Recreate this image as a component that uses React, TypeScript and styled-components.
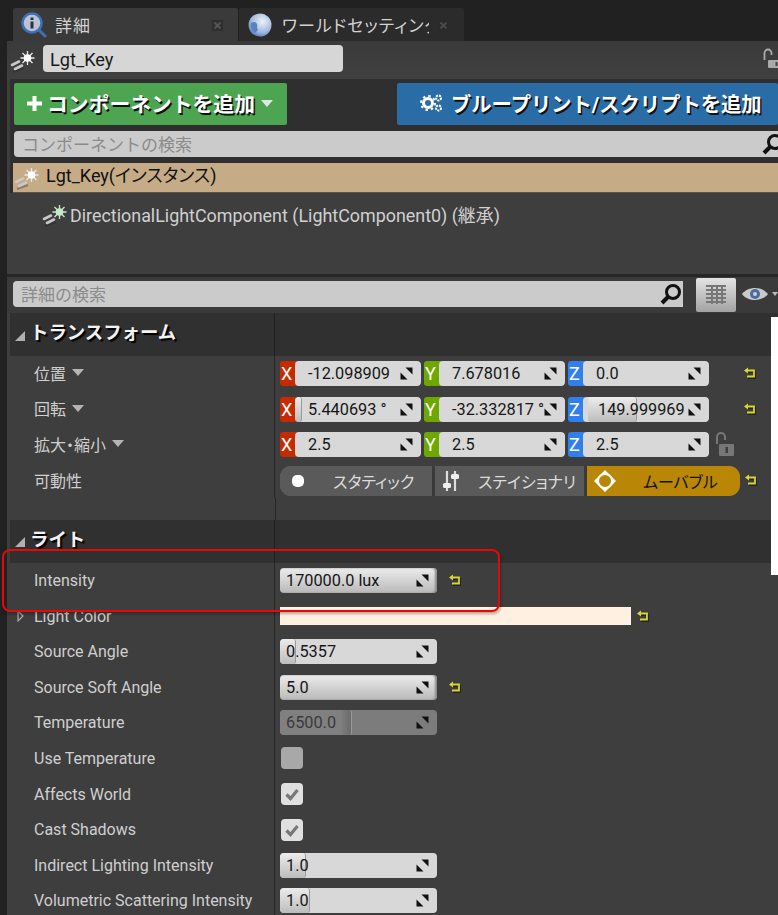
import React from "react";
import styled, { createGlobalStyle } from "styled-components";

const Global = createGlobalStyle`
  html, body { margin: 0; padding: 0; background: #212121; }
  * { box-sizing: border-box; }
`;
const FONT = `Roboto, "Noto Sans CJK JP", sans-serif`;

const Page = styled.div`
  position: relative; width: 778px; height: 915px; overflow: hidden;
  background: #212121; font-family: ${FONT}; font-size: 16px; color: #d4d4d4;
`;
const TabBar = styled.div`display: flex; height: 41px; padding: 8px 0 0 13px; gap: 1px;`;
const Tab = styled.div<{ $active?: boolean }>`
  width: 225px; display: flex; align-items: center; position: relative;
  background: ${p => (p.$active ? "#3a3a3a" : "#2b2b2b")};
  padding-left: ${p => (p.$active ? "8px" : "9px")};
  border-radius: 2px 2px 0 0; overflow: hidden;
`;
const TabIcon = styled.svg`flex: none; width: 26px; height: 26px;`;
const TabTitle = styled.span<{ $w: number }>`
  width: ${p => p.$w}px; margin-left: 8px; overflow: hidden; white-space: nowrap;
  font-size: 17px; letter-spacing: 1px; color: #d2d2d2; flex: none; font-feature-settings: "palt";
`;
const CloseBox = styled.svg`position: absolute; right: 15px; top: 12px; width: 11px; height: 11px;`;

const Panel = styled.div`margin-left: 7px; background: #3e3e3e;`;
const NameBar = styled.div`height: 38px; display: flex; align-items: center; padding-left: 3px; position: relative; background: linear-gradient(#3a3a3a, #404040);`;
const LightIcon = styled.svg`flex: none; width: 25px; height: 25px;`;
const NameInput = styled.div`
  width: 300px; height: 27px; margin: -3px 0 0 8px; background: #d6d6d6; border-radius: 4px;
  color: #1a1a1a; font-size: 18.2px; line-height: 29px; padding-left: 7px;
`;
const LockIcon = styled.svg`position: absolute; left: 756px; top: 7px; width: 18px; height: 21px;`;

const ComponentArea = styled.div`background: #2f2f2f; margin-left: 3px; padding: 4px 0 0 0;`;
const ButtonRow = styled.div`display: flex; padding-left: 4px; justify-content: space-between;`;
const AddButton = styled.div<{ $blue?: boolean }>`
  height: 42px; display: flex; align-items: center; border-radius: 2px;
  background: ${p => (p.$blue ? "#2a6ca6" : "#4ea551")};
  width: ${p => (p.$blue ? "381px" : "273px")};
  padding: 0 0 2px ${p => (p.$blue ? "23px" : "12px")};
  color: #fff; font-weight: 700; font-size: ${p => (p.$blue ? "20.3px" : "20.8px")}; white-space: nowrap;
  text-shadow: 1.5px 1.5px 0 #111;
`;
const GearIcon = styled.svg`flex: none; width: 23px; height: 20px; margin-right: 8px;`;
const PlusIcon = styled.svg`flex: none; width: 17px; height: 17px; margin-right: 4px;`;
const Caret = styled.svg`flex: none; width: 12px; height: 7px; margin-left: 6px;`;
const SearchBox = styled.div<{ $w: number; $ml: number }>`
  width: ${p => p.$w}px; height: 26px; margin-left: ${p => p.$ml}px;
  background: #cbcbcb; border-radius: 4px 0 0 4px; display: flex; align-items: center;
  padding: 0 0 2px 8px; color: #8b8b8b; font-size: 17px; position: relative;
`;
const SearchGlyph = styled.svg<{ $r: number }>`position: absolute; right: ${p => p.$r}px; top: 1px; width: 24px; height: 24px;`;
const SearchSpacer = styled.div`padding: 6px 0 6px 0; `;
const SelectedRow = styled.div`
  height: 30px; margin-left: 3px; background: #c6ab87; display: flex; align-items: center;
  color: #111; font-size: 18px; padding-left: 1px; border-bottom: 1px solid #555; 
`;
const SelText = styled.span`margin: -7px 0 0 7px; font-feature-settings: "palt";`;
const TreeArea = styled.div`height: 81px; background: #3e3e3e; margin-left: -3px; padding: 8px 0 0 35px;`;
const TreeRow = styled.div`display: flex; align-items: center; gap: 3px; font-size: 17.9px; color: #d0d0d0; white-space: nowrap;`;
const Divider = styled.div`height: 3px; background: #262626;`;
const DetailTop = styled.div`height: 36px; background: #3a3a3a; position: relative; padding: 4px 0 0 0;`;
const GridButton = styled.div`
  position: absolute; left: 689px; top: 1px; width: 40px; height: 34px; border-radius: 2px;
  background: linear-gradient(#e4e4e4, #a2a2a2); display: flex; align-items: center; justify-content: center;
`;
const GridGlyph = styled.svg`width: 22px; height: 22px;`;
const EyeGlyph = styled.svg`position: absolute; left: 735px; top: 6px; width: 36px; height: 22px;`;

const Sheet = styled.div`margin-left: 3px;`;
const Header = styled.div`
  height: 43px; display: grid; grid-template-columns: 265px 1fr; background: #303030;
`;
const HeaderName = styled.div`
  display: flex; align-items: center; border-right: 1px solid #202020;
  color: #f2f2f2; font-weight: 700; font-size: 18.4px; text-shadow: 2px 2px 1px #000;
  padding: 0 0 7px 5px;
`;
const HeadTri = styled.svg`flex: none; width: 10px; height: 10px; margin: 9px 5px 0 0;`;
const Row = styled.div`height: 35.55px; display: grid; grid-template-columns: 265px 1fr;`;
const Label = styled.div<{ $jp?: boolean }>`
  display: flex; align-items: center; padding: 0 0 ${p => (p.$jp ? "2px" : "0")} 24px; border-right: 1px solid #262626;
  color: #cfcfcf; font-size: 16px; white-space: nowrap; font-feature-settings: ${p => (p.$jp ? '"palt"' : "normal")};
`;
const ValueCell = styled.div`display: flex; align-items: center; padding-left: 5px; position: relative;`;
const Spacer = styled.div<{ $h: number }>`
  height: ${p => p.$h}px; width: 266px; border-right: 1px solid #262626;
`;
const LabelCaret = styled.svg`flex: none; width: 12px; height: 7px; margin-left: 6px;`;
const Expander = styled.svg`flex: none; width: 7px; height: 12px; margin: 0 10px 0 -17px;`;

const Axis = styled.div`display: flex; width: 141px; height: 25px; margin-right: 3px; border-radius: 3px; overflow: hidden;`;
const AxisTag = styled.div<{ $c: string }>`
  width: 18px; margin-right: -3px; background: ${p => p.$c}; color: #fff; font-size: 18px; padding-left: 1px; line-height: 25px; flex: none;
`;
const NumField = styled.div<{ $w?: number; $dim?: boolean; $full?: boolean }>`
  position: relative; height: 25px; flex: ${p => (p.$w ? "none" : "1")};
  width: ${p => (p.$w ? `${p.$w}px` : "auto")};
  background: ${p => (p.$dim ? "#7c7c7c" : p.$full ? "linear-gradient(#ececec, #b9b9b9)" : "#d8d8d8")};
  box-shadow: ${p => (p.$full ? "inset -2px 0 2px #8a8a8a" : "none")};
  border-radius: 4px; color: ${p => (p.$dim ? "#3a3a3a" : "#161616")};
  overflow: hidden; font-size: 16.3px; line-height: 25px;
`;
const Knob = styled.div<{ $dim?: boolean }>`
  position: absolute; top: 0; bottom: 0; border-radius: 3px;
  background: ${p => (p.$dim ? "linear-gradient(90deg,#808080 85%,#6a6a6a)" : "linear-gradient(#ececec,#bcbcbc)")};
  border-right: 1px solid ${p => (p.$dim ? "#999" : "#9a9a9a")};
`;
const NumText = styled.span<{ $x: number }>`position: absolute; left: ${p => p.$x}px; top: 0; white-space: nowrap;`;
const Spin = styled.svg`position: absolute; right: 8px; top: 6px; width: 13px; height: 13px;`;
const Revert = styled.svg<{ $ml: number }>`flex: none; width: 13px; height: 13px; margin-left: ${p => p.$ml}px;`;
const OpenLock = styled.svg`flex: none; width: 21px; height: 26px; margin-left: 2px;`;

const Mobility = styled.div`display: flex; width: 460px; height: 30px; margin-top: 1px; border-radius: 11px; overflow: hidden; background: #5a5a5a;`;
const MobSeg = styled.div<{ $on?: boolean; $w: number }>`
  width: ${p => p.$w}px; display: flex; align-items: center; position: relative;
  background: ${p => (p.$on ? "#b98606" : "#5a5a5a")};
  color: ${p => (p.$on ? "#111" : "#dcdcdc")}; font-size: 16px; white-space: nowrap;
  border-right: ${p => (p.$on ? "0" : "3px solid #3a3a3a")};
  font-feature-settings: "palt";
`;
const MobIcon = styled.svg`position: absolute; left: 6px; top: 3px; width: 24px; height: 24px;`;
const MobText = styled.span<{ $x: number }>`position: absolute; left: ${p => p.$x}px;`;
const Swatch = styled.div`width: 351px; height: 18px; background: #fff0df;`;
const Check = styled.div<{ $off?: boolean }>`
  width: 22px; height: 22px; margin-left: 1px; border-radius: 4px;
  background: ${p => (p.$off ? "#a8a8a8" : "#e0e0e0")}; display: flex; align-items: center; justify-content: center;
`;
const CheckMark = styled.svg`width: 16px; height: 16px;`;
const SideStrip = styled.div`position: absolute; left: 771px; top: 317px; width: 7px; height: 258px; background: #fff;`;
const Callout = styled.div`
  position: absolute; left: 2px; top: 549px; width: 498px; height: 63px;
  border: 2px solid #e80808; border-radius: 8px; box-shadow: 1px 2px 3px rgba(0,0,0,.3);
  pointer-events: none;
`;

const SpinIcon = () => (
  <Spin viewBox="0 0 13 13">
    <path d="M5.500 0.500h7v7z" fill="#111" />
    <path d="M0.500 5.500l7 7h-7z" fill="#111" />
  </Spin>
);
const RevertIcon = ({ ml }: { ml: number }) => (
  <Revert $ml={ml} viewBox="0 0 13 13">
    <path d="M3 4h8v6H4" fill="none" stroke="#1c1c10" strokeWidth="2" transform="translate(.8 .8)" />
    <path d="M3 3.500h8v6H4" fill="none" stroke="#d8d82c" strokeWidth="1.800" />
    <path d="M5 0.500v6L1 3.500z" fill="#d8d82c" />
  </Revert>
);
const Light = ({ green }: { green?: boolean }) => (
  <LightIcon viewBox="0 0 25 25">
    <path d="M3 24l11-4" stroke="#222" strokeWidth="2" opacity=".35" />
    <path d="M2 17l7-3.500M5 21l7-3.500" stroke="#c8c8c8" strokeWidth="2.600" strokeLinecap="round" />
    <g stroke={green ? "#c8e8c8" : "#e8e8e8"} strokeWidth="1.300">
      <path d="M17.500 3v14M10.500 10h14M12.500 5l10 10M22.500 5l-10 10" />
    </g>
    <circle cx="17.500" cy="10" r="3.800" fill={green ? "#c4ecc4" : "#fff"} />
  </LightIcon>
);
const Tri = () => (
  <LabelCaret viewBox="0 0 12 7"><path d="M0 0h12L6 7z" fill="#b4b4b4" /></LabelCaret>
);
const Head = ({ title }: { title: string }) => (
  <Header>
    <HeaderName>
      <HeadTri viewBox="0 0 10 10"><path d="M10 0v10H0z" fill="#b0b0b0" /></HeadTri>
      {title}
    </HeaderName>
    <div />
  </Header>
);

type Vec = { tag: string; color: string; text: string; x?: number; knob?: [number, number] };
const VecField = ({ tag, color, text, x = 13, knob }: Vec) => (
  <Axis>
    <AxisTag $c={color}>{tag}</AxisTag>
    <NumField>
      {knob && <Knob style={{ left: knob[0], width: knob[1] }} />}
      <NumText $x={x}>{text}</NumText>
      <SpinIcon />
    </NumField>
  </Axis>
);
const vec = (a: string, b: string, c: string, k1?: [number, number], k3?: [number, number]) => (
  <>
    <VecField tag="X" color="#c82a00" text={a} knob={k1} />
    <VecField tag="Y" color="#6ca800" text={b} />
    <VecField tag="Z" color="#2f80ed" text={c} x={c.length > 5 ? 15 : 13} knob={k3} />
  </>
);
const Slider = ({ text, knob, full, dim }: { text: string; knob?: number; full?: boolean; dim?: boolean }) => (
  <NumField $w={157} $full={full} $dim={dim}>
    {knob !== undefined && <Knob $dim={dim} style={{ left: 0, width: knob }} />}
    <NumText $x={6}>{text}</NumText>
    <SpinIcon />
  </NumField>
);
const CheckBox = ({ on }: { on?: boolean }) => (
  <Check $off={!on}>
    {on && (
      <CheckMark viewBox="0 0 16 16">
        <path d="M2.500 8.500l4 4 7-8.500" fill="none" stroke="#777" strokeWidth="3.200" />
      </CheckMark>
    )}
  </Check>
);

export default function App() {
  return (
    <Page>
      <Global />
      <TabBar>
        <Tab $active>
          <TabIcon viewBox="0 0 26 26">
            <path d="M17 17l7 7" stroke="#3f6fb5" strokeWidth="3" strokeLinecap="round" />
            <circle cx="11" cy="11" r="9.500" fill="#b9c4d6" stroke="#3f6fb5" strokeWidth="2.500" />
            <rect x="9.500" y="9.500" width="3" height="7" fill="#333" />
            <rect x="9.500" y="5.500" width="3" height="2.500" fill="#333" />
          </TabIcon>
          <TabTitle $w={60}>詳細</TabTitle>
          <CloseBox viewBox="0 0 11 11"><rect width="11" height="11" rx="1" fill="#2e2e2e" /><path d="M2.500 2.500l6 6M8.500 2.500l-6 6" stroke="#555" strokeWidth="2" /></CloseBox>
        </Tab>
        <Tab>
          <TabIcon viewBox="0 0 26 26">
            <defs><radialGradient id="g" cx=".6" cy=".35" r=".8"><stop offset="0" stopColor="#eef3fa" /><stop offset=".6" stopColor="#9db7dd" /><stop offset="1" stopColor="#3a5ea8" /></radialGradient></defs>
            <circle cx="12" cy="13" r="11.500" fill="url(#g)" />
            <path d="M3 11c3-2 5-1 6 1s-1 3 1 6l-3 3C4 19 2 15 3 11z" fill="#5a82bf" />
          </TabIcon>
          <TabTitle $w={147}>ワールドセッティング</TabTitle>
          <CloseBox viewBox="0 0 11 11"><rect width="11" height="11" rx="1" fill="#2a2a2a" /><path d="M2.500 2.500l6 6M8.500 2.500l-6 6" stroke="#4a4a4a" strokeWidth="2" /></CloseBox>
        </Tab>
      </TabBar>
      <Panel>
        <NameBar>
          <Light />
          <NameInput>Lgt_Key</NameInput>
          <LockIcon viewBox="0 0 18 21">
            <path d="M1.500 12V5a3.500 3.500 0 0 1 7 0v2" fill="none" stroke="#aaa" strokeWidth="1.800" />
            <rect x="5" y="12" width="13" height="8" rx="1" fill="#aaa" />
            <rect x="12.500" y="14" width="2" height="4" fill="#3e3e3e" />
          </LockIcon>
        </NameBar>
        <ComponentArea>
          <ButtonRow>
            <AddButton>
              <PlusIcon viewBox="0 0 17 17"><path d="M8.500 1v15M1 8.500h15" stroke="#fff" strokeWidth="4" /></PlusIcon>
              コンポーネントを追加
              <Caret viewBox="0 0 12 7"><path d="M0 0h12L6 7z" fill="#e4e4e4" /></Caret>
            </AddButton>
            <AddButton $blue>
              <GearIcon viewBox="0 0 23 20">
                <circle cx="8" cy="10" r="4.500" fill="none" stroke="#fff" strokeWidth="3" />
                <circle cx="8" cy="10" r="7" fill="none" stroke="#fff" strokeWidth="2" strokeDasharray="2.500 3" />
                <circle cx="18.500" cy="5" r="2.500" fill="none" stroke="#fff" strokeWidth="2" strokeDasharray="2 1" />
                <circle cx="18.500" cy="15" r="2.500" fill="none" stroke="#fff" strokeWidth="2" strokeDasharray="2 1" />
              </GearIcon>
              ブループリント/スクリプトを追加
            </AddButton>
          </ButtonRow>
          <SearchSpacer>
            <SearchBox $w={764} $ml={4}>
              コンポーネントの検索
              <SearchGlyph $r={-7} viewBox="0 0 24 24">
                <circle cx="14" cy="10" r="6.500" fill="none" stroke="#111" strokeWidth="3" />
                <path d="M9 15l-6 6" stroke="#111" strokeWidth="4" />
              </SearchGlyph>
            </SearchBox>
          </SearchSpacer>
          <SelectedRow>
            <Light />
            <SelText>Lgt_Key(インスタンス)</SelText>
          </SelectedRow>
          <TreeArea>
            <TreeRow>
              <Light green />
              <span>DirectionalLightComponent (LightComponent0) (継承)</span>
            </TreeRow>
          </TreeArea>
        </ComponentArea>
        <Divider />
        <DetailTop>
          <SearchBox $w={670} $ml={6}>
            詳細の検索
            <SearchGlyph $r={0} viewBox="0 0 24 24">
              <circle cx="14" cy="10" r="6.500" fill="none" stroke="#111" strokeWidth="3" />
              <path d="M9 15l-6 6" stroke="#111" strokeWidth="4" />
            </SearchGlyph>
          </SearchBox>
          <GridButton>
            <GridGlyph viewBox="0 0 22 22">
              <path d="M1 2h20M1 6h20M1 10h20M1 14h20M1 18h20M7 1v19M12 1v19M17 1v19" stroke="#777" strokeWidth="2" />
            </GridGlyph>
          </GridButton>
          <EyeGlyph viewBox="0 0 36 22">
            <path d="M0 11c6-8 20-8 26 0-6 8-20 8-26 0z" fill="#c9c9c9" />
            <circle cx="13" cy="11" r="5" fill="#4a6aa0" />
            <circle cx="13" cy="11" r="2" fill="#ccd" />
            <path d="M30 9h6l-3 4z" fill="#bbb" />
          </EyeGlyph>
        </DetailTop>
        <Sheet>
          <Head title="トランスフォーム" />
          <Row><Label $jp>位置<Tri /></Label><ValueCell>{vec("-12.098909", "7.678016", "0.0")}<RevertIcon ml={31} /></ValueCell></Row>
          <Row><Label $jp>回転<Tri /></Label><ValueCell>{vec("5.440693 °", "-32.332817 °", "149.999969", [0, 7], [5, 49])}<RevertIcon ml={31} /></ValueCell></Row>
          <Row>
            <Label $jp>拡大・縮小<Tri /></Label>
            <ValueCell>
              {vec("2.5", "2.5", "2.5")}
              <OpenLock viewBox="0 0 21 26">
                <path d="M3 12V5a4 4 0 0 1 8 0v3" fill="none" stroke="#777" strokeWidth="2" />
                <rect x="5" y="12" width="15" height="12" rx="1" fill="#777" />
                <rect x="11.500" y="15" width="2.500" height="6" fill="#3e3e3e" />
              </OpenLock>
            </ValueCell>
          </Row>
          <Row>
            <Label>可動性</Label>
            <ValueCell>
              <Mobility>
                <MobSeg $w={155}>
                  <MobIcon viewBox="0 0 24 24"><rect x="6" y="6" width="12" height="12" rx="5" fill="#fff" /></MobIcon>
                  <MobText $x={53}>スタティック</MobText>
                </MobSeg>
                <MobSeg $w={152}>
                  <MobIcon viewBox="0 0 24 24">
                    <path d="M6 2v20M14 2v20" stroke="#ddd" strokeWidth="2.200" />
                    <rect x="2" y="14" width="8" height="5" rx="1.500" fill="#eee" />
                    <rect x="10" y="5" width="8" height="5" rx="1.500" fill="#eee" />
                  </MobIcon>
                  <MobText $x={43}>ステイショナリ</MobText>
                </MobSeg>
                <MobSeg $on $w={153}>
                  <MobIcon viewBox="0 0 24 24">
                    <circle cx="12" cy="12" r="7" fill="none" stroke="#fff" strokeWidth="2" />
                    <path d="M12 1l5 5H7zM12 23l-5-5h10zM1 12l5-5v10zM23 12l-5 5V7z" fill="#fff" />
                  </MobIcon>
                  <MobText $x={56}>ムーバブル</MobText>
                </MobSeg>
              </Mobility>
              <RevertIcon ml={4} />
            </ValueCell>
          </Row>
          <Spacer $h={21.8} />
          <Head title="ライト" />
          <Row><Label>Intensity</Label><ValueCell><Slider text="170000.0 lux" full /><RevertIcon ml={11} /></ValueCell></Row>
          <Row>
            <Label>
              <Expander viewBox="0 0 7 12"><path d="M1 1l5 5-5 5z" fill="none" stroke="#aaa" strokeWidth="1.200" /></Expander>
              Light Color
            </Label>
            <ValueCell><Swatch /><RevertIcon ml={5} /></ValueCell>
          </Row>
          <Row><Label>Source Angle</Label><ValueCell><Slider text="0.5357" knob={16} /></ValueCell></Row>
          <Row><Label>Source Soft Angle</Label><ValueCell><Slider text="5.0" full /><RevertIcon ml={11} /></ValueCell></Row>
          <Row><Label>Temperature</Label><ValueCell><Slider text="6500.0" knob={72} dim /></ValueCell></Row>
          <Row><Label>Use Temperature</Label><ValueCell><CheckBox /></ValueCell></Row>
          <Row><Label>Affects World</Label><ValueCell><CheckBox on /></ValueCell></Row>
          <Row><Label>Cast Shadows</Label><ValueCell><CheckBox on /></ValueCell></Row>
          <Row><Label>Indirect Lighting Intensity</Label><ValueCell><Slider text="1.0" knob={26} /></ValueCell></Row>
          <Row><Label>Volumetric Scattering Intensity</Label><ValueCell><Slider text="1.0" knob={30} /></ValueCell></Row>
        </Sheet>
      </Panel>
      <SideStrip />
      <Callout />
    </Page>
  );
}
